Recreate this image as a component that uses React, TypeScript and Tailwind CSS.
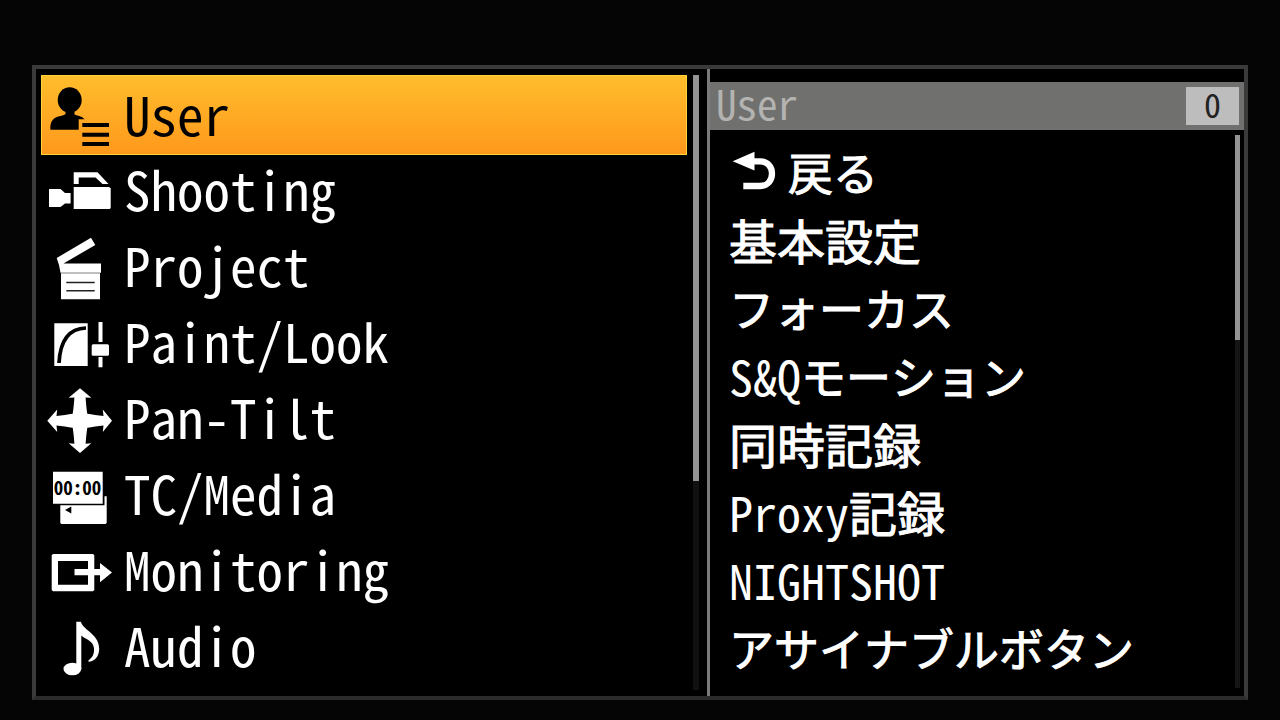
import type { ReactNode } from "react";

// Camera on-screen menu: main categories on the left, the selected category's items on the right.

const FONT = "font-['Noto_Sans_Mono_CJK_JP','Noto_Sans_CJK_JP',monospace]";

const UserIcon = () => (
  <>
    <ellipse cx="21.7" cy="17" rx="12" ry="12.7" />
    <path d="M17.5 26h9v5.500c3.500 1.500 7.500 1.500 10 4.700h-5.800v10.600H2.400c-.4-7 1.500-11.500 8.100-13.300 3-.8 5-1 7-2.500z" />
    <path d="M34.300 40H61v4H34.300zM34.300 49.700H61v4H34.300zM34.300 59H61v4H34.300z" />
  </>
);

const ShootingIcon = () => (
  <>
    <path d="M1 31h11.500l4.500 4h5.600v10.500H17L12.500 49H1z" />
    <path d="M25.700 29h35.500l1.500 1.500V50l-1 1h-36z" />
    <path d="M25.700 14.300h23.800L60.500 26h-6L47.500 19.500H30.700V26h-5z" />
  </>
);

const ProjectIcon = () => (
  <>
    <path d="M43 3.700l4.300 7.300-31.800 18.500H53v9.200H12.500L11 31 8.700 24z" />
    <path d="M13 39.200h39v26.100H13z" />
    <path d="M18.300 48.500h28.400M18.300 56.800h28.400" stroke="#222" strokeWidth="1.500" />
  </>
);

const PaintIcon = () => (
  <>
    <path d="M6.300 13.300h33.400V56H6.300z" />
    <path d="M11 53C12 34 19 18.500 38 18" fill="none" stroke="#000" strokeWidth="3.700" />
    <path d="M50.500 12h4v20h-4zM50.500 47h4v10.300h-4z" />
    <rect x="43.700" y="34.300" width="17.300" height="11.400" rx="1.500" />
  </>
);

const PanTiltIcon = () => (
  <path d="M32 2.300L43.300 11.700 37.600 11.500C38 17 38.500 23 39.300 27.800C44 28.500 50 29.500 55.500 30L54.800 23.500 64 34.700 54.800 46 55.500 39.500C50 40 44 41 39.300 41.700C38.500 47 38 52 37.600 57.800L43.300 57.300 32 67 20.700 57.300 26.400 57.800C26 52 25.500 47 24.700 41.700C20 41 14 40 8.500 39.500L9.200 46 -.7 34.700 9.200 23.500 8.500 30C14 29.500 20 28.500 24.700 27.800C25.500 23 26 17 26.400 11.500L20.700 11.700z" />
);

const MediaIcon = () => (
  <>
    <path d="M56.500 34.300h2.200v26.500l-1 1.200H13.300l-1-1V43.300h44.200z" />
    <path d="M5 9.700h49.700v32H5z" />
    <path d="M17 48l6.300-3.400v7z" fill="#000" />
    <text x="29.500" y="33" textAnchor="middle" fill="#000" className="text-[19px] font-bold">
      00:00
    </text>
  </>
);

const MonitoringIcon = () => (
  <>
    <path fillRule="evenodd" d="M5 16h40l1.300 1.300V52L45 53.300H5L3.700 52V17.300zM10 23v23.700h30V23z" />
    <path d="M26.500 31H52v-6l12 9.500-12 9.800v-7H26.500z" />
  </>
);

const AudioIcon = () => (
  <>
    <ellipse cx="24.400" cy="55" rx="8.900" ry="6.300" />
    <path d="M28.300 7.700h4.500C36 17 51.300 20 51.200 35c-.1 8-5 12.500-10.700 12.700v-1.500c4-2.500 6-6.500 5.500-12C45 26 37 25.500 33.300 21.500V55h-5z" />
  </>
);

const ReturnIcon = () => (
  <svg viewBox="0 0 44 40" aria-hidden="true" className="h-10 w-11 shrink-0 fill-current">
    <path d="M.7 10.300L22.500.7v18.800z" />
    <path d="M21 10.300h7C35.500 10.300 40 16 40 22.500S36 35 28 35H11.300" fill="none" stroke="currentColor" strokeWidth="6.300" />
  </svg>
);

const categories: { label: string; icon: ReactNode }[] = [
  { label: "User", icon: <UserIcon /> },
  { label: "Shooting", icon: <ShootingIcon /> },
  { label: "Project", icon: <ProjectIcon /> },
  { label: "Paint/Look", icon: <PaintIcon /> },
  { label: "Pan-Tilt", icon: <PanTiltIcon /> },
  { label: "TC/Media", icon: <MediaIcon /> },
  { label: "Monitoring", icon: <MonitoringIcon /> },
  { label: "Audio", icon: <AudioIcon /> },
];

// Latin, kanji and kana differ in weight and size, so each run is kept apart
const items: { latin?: string; kanji?: string; kana?: string }[] = [
  { kanji: "基本設定" },
  { kana: "フォーカス" },
  { latin: "S&Q", kana: "モーション" },
  { kanji: "同時記録" },
  { latin: "Proxy", kanji: "記録" },
  { latin: "NIGHTSHOT" },
  { kana: "アサイナブルボタン" },
];

const KANJI = "[-webkit-text-stroke:1px_white]";
const KANA = "text-[45px] leading-none [-webkit-text-stroke:1px_white]";

function CategoryRow({ label, icon, selected }: { label: string; icon: ReactNode; selected: boolean }) {
  return (
    <button
      type="button"
      aria-current={selected}
      className={
        selected
          ? "-mb-[3px] flex h-20 items-center gap-3 border border-[#ffd23a] bg-linear-to-b from-[#ffbd2c] to-[#ff981c] pl-1.5 text-left text-black"
          : "flex h-[76px] items-center gap-3 pl-[7px] text-left text-white"
      }
    >
      <svg viewBox="0 0 64 64" aria-hidden="true" className="size-16 shrink-0 overflow-visible fill-current">
        {icon}
      </svg>
      <span className="pb-1">{label}</span>
    </button>
  );
}

export default function App() {
  return (
    <main lang="ja" className={`flex min-h-screen flex-col bg-[#050505] px-8 pt-[65px] pb-5 text-white ${FONT}`}>
      <div className="grid grow grid-cols-[671fr_537fr] border-4 border-[#3a3a3a] border-b-[#2b2b2b] bg-black">
        <nav aria-label="Menu" className="flex gap-1.5 pt-1.5 pr-2 pb-1.5 pl-[5px]">
          <div className="flex grow flex-col text-[53px] leading-none">
            {categories.map((c, i) => (
              <CategoryRow key={c.label} label={c.label} icon={c.icon} selected={i === 0} />
            ))}
          </div>
          <div className="w-1.5 bg-[#111]">
            <div className="h-[66%] bg-[#949494]" />
          </div>
        </nav>

        <section className="flex flex-col border-l-3 border-[#7a7a7a] pt-[13px]">
          <header className="flex h-12 items-center justify-between bg-[#70706e] pr-[5px] pl-1.5">
            <h1 className="pb-2 text-[41px] leading-none text-[#b3b3b1]">User</h1>
            <span className="flex h-[38px] w-[53px] items-center justify-center bg-[#bdbdbd] pb-1 text-[34px] leading-none text-[#222]">0</span>
          </header>
          <div className="flex grow pt-[5px] pr-1 pb-2">
            <div className="flex grow flex-col pt-0.5 pl-[19px] text-5xl leading-none">
              <button type="button" className="flex h-[68px] items-center gap-3 pl-[3px] text-left">
                <ReturnIcon />
                <span className={KANA}>戻る</span>
              </button>
              {items.map(({ latin, kanji, kana }) => (
                <button key={`${latin}${kanji}${kana}`} type="button" className="flex h-[68px] items-center text-left">
                  {latin && <span>{latin}</span>}
                  {kanji && <span className={KANJI}>{kanji}</span>}
                  {kana && <span className={KANA}>{kana}</span>}
                </button>
              ))}
            </div>
            <div className="w-[5px] bg-[#151515]">
              <div className="h-[37%] bg-[#949494]" />
            </div>
          </div>
        </section>
      </div>
    </main>
  );
}
